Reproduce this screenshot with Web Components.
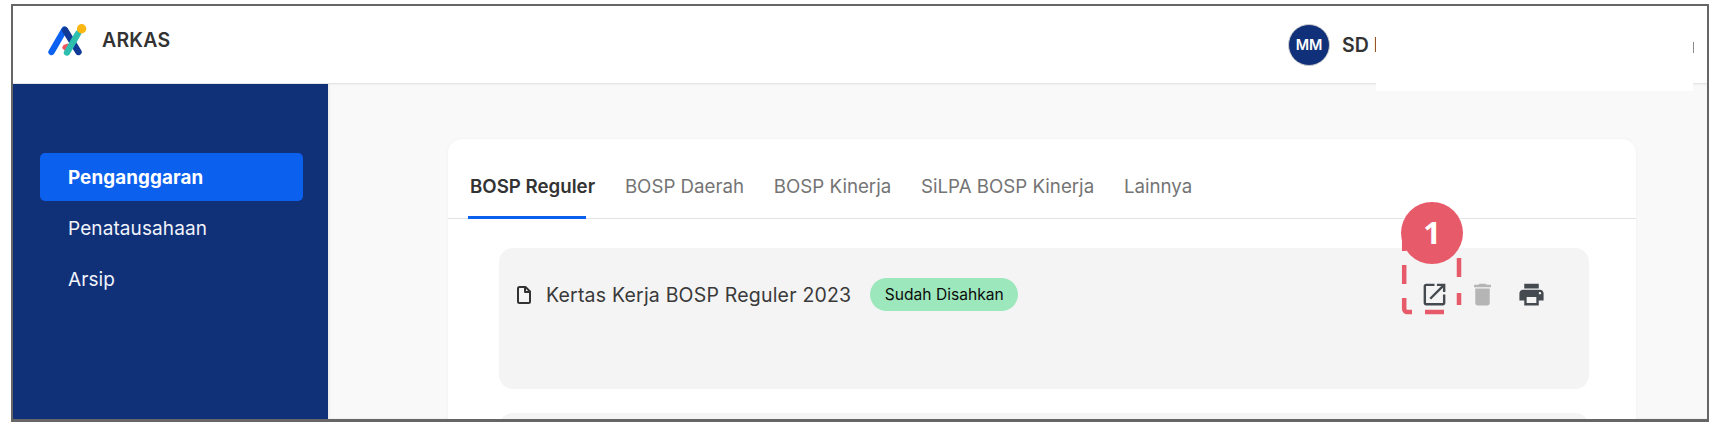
<!doctype html>
<html><head><meta charset="utf-8"><title>ARKAS</title>
<style>
html,body{margin:0;padding:0;background:#fff;font-family:Inter,"Liberation Sans",sans-serif;}
body{height:427px;overflow:hidden}
</style></head><body>
<arkas-app></arkas-app>
<script>
function el(name, css, html){
  customElements.define(name, class extends HTMLElement{
    constructor(){super();const r=this.attachShadow({mode:'open'});r.innerHTML='<style>'+css+'</style>'+html;}
  });
}
el('arkas-logo',':host{display:block;width:39px;height:33px}svg{display:block}',
`<svg width="39" height="33" viewBox="0 0 39 33">
<path d="M3.500 28 L16.500 5.500" stroke="#0b62f0" stroke-width="6.400" stroke-linecap="round" fill="none"/>
<path d="M17 6 L30.500 28" stroke="#113a96" stroke-width="6.400" stroke-linecap="round" fill="none"/>
<path d="M15.500 21 l4.500 -1.500 l3 6 l-3.500 3.500 l-5.500 -5 z" fill="#ef5560"/>
<path d="M19 28.500 L30 9.500" stroke="#2dbfae" stroke-width="6.400" stroke-linecap="round" fill="none"/>
<circle cx="33.600" cy="4.700" r="4.700" fill="#fbb612"/></svg>`);
el('arkas-header',`:host{display:flex;align-items:center;height:77px;border-bottom:1px solid #e4e4e6;background:#fff;box-sizing:content-box;flex:none;font-family:Inter,sans-serif}
.brand{display:flex;align-items:center;gap:15px;margin-left:35px;margin-bottom:9px}
.name{font-size:19.500px;font-weight:600;color:#333;letter-spacing:.2px}
.user{display:flex;align-items:center;gap:12px;margin-left:auto;margin-right:223px;width:196px}
.av{width:42px;height:42px;border-radius:50%;background:#10317a;color:#fff;font-size:14.500px;font-weight:600;display:flex;align-items:center;justify-content:center;border:1px solid #ccc;box-sizing:border-box;flex:none}
.sd{font-size:19.500px;font-weight:600;color:#333;white-space:nowrap}`,
`<div class="brand"><arkas-logo></arkas-logo><span class="name">ARKAS</span></div>
<div class="user"><div class="av">MM</div><span class="sd">SD N</span></div>`);
el('nav-item',`:host{display:flex;align-items:center;height:48px;padding-left:28px;border-radius:5px;font-size:19px;color:#f0f3fa;letter-spacing:.1px;font-family:Inter,sans-serif}
:host([active]){background:#0b60ee;color:#fff;font-weight:700;font-size:18.800px}`,`<slot></slot>`);
el('arkas-sidebar',`:host{display:flex;flex-direction:column;gap:3px;width:315px;flex:none;box-sizing:border-box;padding:69px 25px 0 27px;background:#103078}`,`<slot></slot>`);
el('tab-item',`:host{display:block;font-size:18.700px;color:#747474;font-family:Inter,sans-serif;padding:0 1px;position:relative;line-height:22px;white-space:nowrap}
:host([active]){color:#333;font-weight:600}
:host([active])::after{content:"";position:absolute;left:-1px;width:118px;top:40px;height:3px;background:#0b60ee}`,`<slot></slot>`);
el('tab-bar',`:host{display:flex;gap:27.800px;padding:37px 0 0 21px;height:42px;border-bottom:1px solid #e3e3e5;flex:none}`,`<slot></slot>`);
el('status-badge',`:host{display:flex;align-items:center;height:33px;padding:0 14.500px;border-radius:17px;background:#9ce7bb;color:#0c0c0c;font-size:15.600px;font-family:Inter,sans-serif;white-space:nowrap;margin-left:19px}`,`<slot></slot>`);
el('icon-actions',`:host{display:flex;align-items:center;margin-left:auto;margin-right:43px}
svg{display:block}`,
`<svg width="29" height="29" viewBox="0 0 24 24" fill="#454a50"><path d="M19 19H5V5h7V3H5c-1.110 0-2 .9-2 2v14c0 1.100.89 2 2 2h14c1.100 0 2-.9 2-2v-7h-2v7zM14 3v2h3.590l-9.830 9.830 1.410 1.410L19 6.410V10h2V3h-7z"/></svg>
<svg style="margin-left:19px" width="29" height="29" viewBox="0 0 24 24" fill="#b5b5b5"><path d="M6 19c0 1.100.9 2 2 2h8c1.100 0 2-.9 2-2V7H6v12zM19 4h-3.500l-1-1h-5l-1 1H5v2h14V4z"/></svg>
<svg style="margin-left:20px" width="29" height="29" viewBox="0 0 24 24" fill="#444a50"><path d="M19 8H5c-1.660 0-3 1.340-3 3v6h4v4h12v-4h4v-6c0-1.660-1.340-3-3-3zm-3 11H8v-5h8v5zm3-7c-.55 0-1-.45-1-1s.45-1 1-1 1 .45 1 1-.45 1-1 1zm-1-9H6v4h12V3z"/></svg>`);
el('budget-row',`:host{display:block;background:#f4f4f4;border-radius:14px;height:141px;margin:0 47px 0 51px;flex:none;box-sizing:border-box;padding:30px 0 0 18px;font-family:Inter,sans-serif}
.r{display:flex;align-items:center;height:33px}
.t{font-size:19.500px;letter-spacing:.2px;color:#3a3a3a;margin-left:15px;white-space:nowrap}
svg{display:block;flex:none}`,
`<div class="r"><svg width="14" height="18" viewBox="0 0 14 18" fill="none" stroke="#333" stroke-width="2" stroke-linejoin="round"><path d="M2.500 1H8.500L13 5.500V15.500A1.500 1.500 0 0 1 11.500 17H2.500A1.500 1.500 0 0 1 1 15.500V2.500A1.500 1.500 0 0 1 2.500 1Z"/><path d="M8 1V6H13"/></svg>
<span class="t"><slot name="title"></slot></span><slot name="badge"></slot><slot name="actions"></slot></div>`);
el('tab-card',`:host{display:flex;flex-direction:column;width:1188px;height:400px;background:#fff;border-radius:14px;flex:none;box-shadow:0 0 3px rgba(0,0,0,.05)}
.list{display:flex;flex-direction:column;gap:24px;padding-top:29px}`,
`<slot name="tabs"></slot><div class="list"><slot></slot></div>`);
el('arkas-main',`:host{display:block;flex:1;min-width:0;background:#f9f9f9;padding:55px 0 0 120px;overflow:hidden;box-shadow:inset 1px 0 3px rgba(0,0,0,.08)}`,`<slot></slot>`);
el('callout-marker',`:host{position:absolute;left:1389px;top:197px;width:80px;height:122px;display:block}
svg{position:absolute;left:0;top:0}
.n{position:absolute;left:12px;top:5px;width:62px;height:62px;border-radius:50%;background:#e65a69;color:#fff;font:700 31px/60px "Open Sans",sans-serif;text-align:center}`,
`<svg width="80" height="122" viewBox="0 0 80 122" fill="none" stroke="#e65a69" stroke-width="4.500">
<path d="M15.200 44V54"/><path d="M15.200 68V87"/><path d="M15.200 101V112a3 3 0 0 0 3 3H23"/><path d="M36 115H55"/>
<path d="M70 108V96"/><path d="M70 80V61"/></svg>
<div class="n">1</div>`);
el('patch-mask',`:host{position:absolute;left:1376px;top:6px;width:317px;height:85px;background:#fff;display:block}
i{position:absolute;right:-1px;top:36px;width:1px;height:11px;background:#8a8a8a}`,`<i></i>`);
el('arkas-app',`:host{display:block;position:relative;width:1718px;height:427px;box-sizing:border-box;padding:4px 9px 5px 11px}
.frame{box-sizing:border-box;height:418px;border:2px solid #666;border-bottom-width:3px;display:flex;flex-direction:column;overflow:hidden;background:#fff}
.body{display:flex;flex:1;min-height:0}`,
`<div class="frame"><arkas-header></arkas-header><div class="body">
<arkas-sidebar><nav-item active>Penganggaran</nav-item><nav-item>Penatausahaan</nav-item><nav-item>Arsip</nav-item></arkas-sidebar>
<arkas-main><tab-card>
<tab-bar slot="tabs"><tab-item active>BOSP Reguler</tab-item><tab-item>BOSP Daerah</tab-item><tab-item>BOSP Kinerja</tab-item><tab-item>SiLPA BOSP Kinerja</tab-item><tab-item>Lainnya</tab-item></tab-bar>
<budget-row><span slot="title">Kertas Kerja BOSP Reguler 2023</span><status-badge slot="badge">Sudah Disahkan</status-badge><icon-actions slot="actions"></icon-actions></budget-row>
<budget-row></budget-row>
</tab-card></arkas-main></div></div>
<patch-mask></patch-mask><callout-marker></callout-marker>`);
</script></body></html>
